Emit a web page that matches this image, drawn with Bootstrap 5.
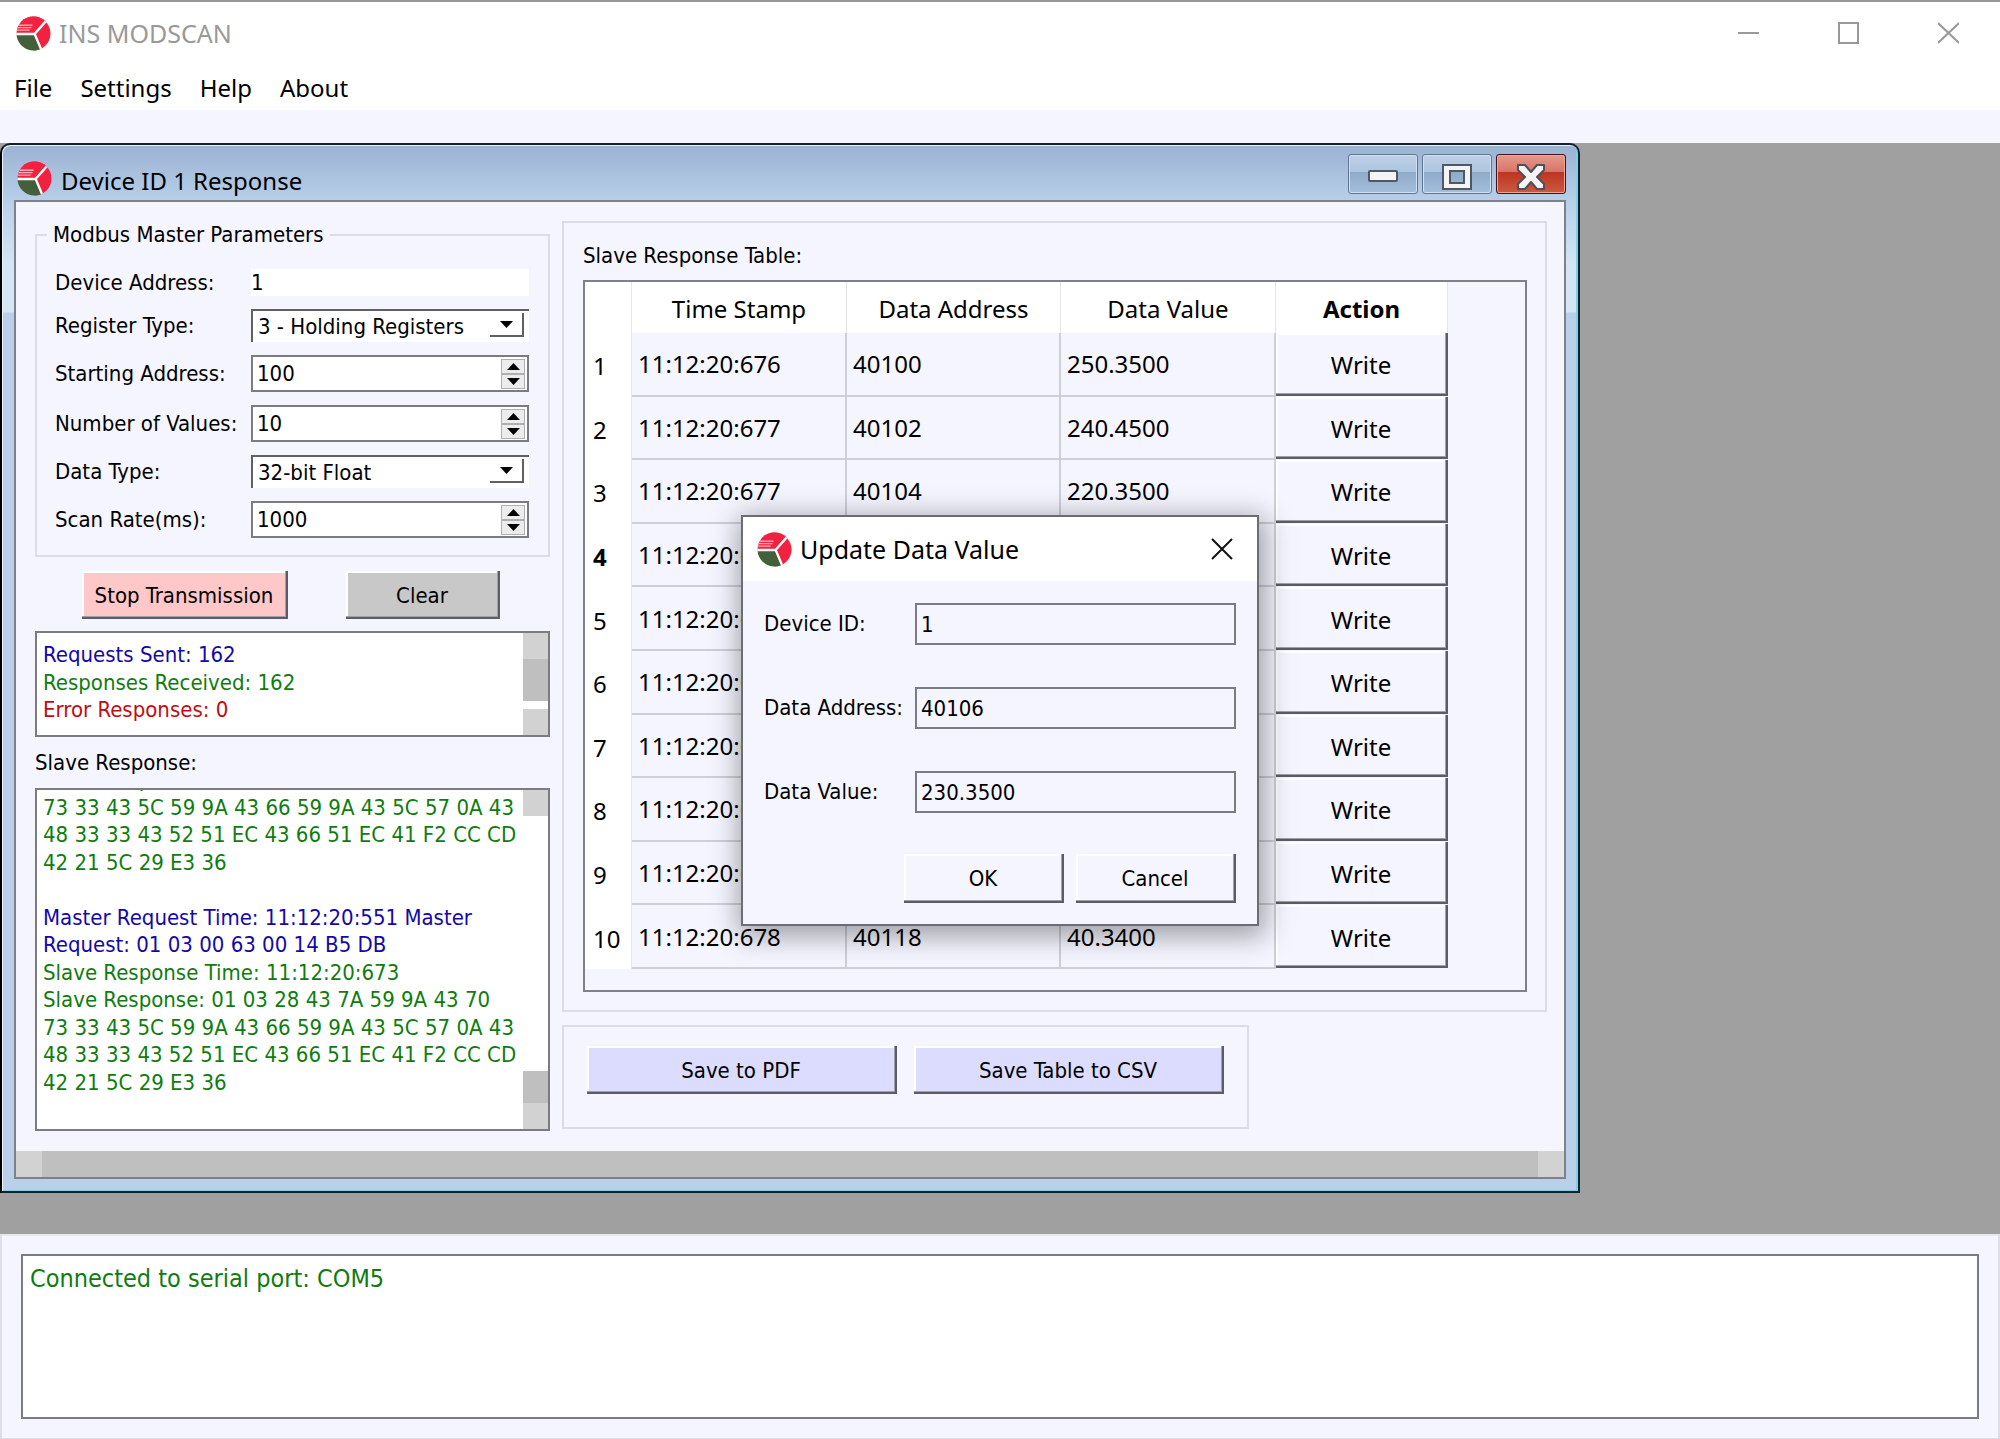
<!DOCTYPE html>
<html lang="en">
<head>
<meta charset="utf-8">
<meta name="viewport" content="width=device-width, initial-scale=1">
<title>INS MODSCAN</title>
<link rel="stylesheet" href="https://cdn.jsdelivr.net/npm/bootstrap@5.3.0/dist/css/bootstrap.min.css">
<style>
:root{--face:#f5f5ff;--line:#dcdce4;--edge:#808088;--ui:"Noto Sans","Open Sans",sans-serif;--tah:"DejaVu Sans Condensed","DejaVu Sans",sans-serif}
body{font-family:var(--ui);font-size:25px;line-height:32px;color:#000;background:#fff}
button,input,select{font:inherit;color:inherit}
.app{min-height:100vh;border-top:2px solid #979797}
.app-title{height:62px;padding-left:16px;color:#999}
.app-title button,.dlg-title button{background:none;border:0;padding:0;line-height:0}
.caption-btns{gap:79px;padding-right:41px}
.menu-bar{height:46px;padding:2px 14px 0;gap:28px;font-size:24px}
.menu-bar a{color:#000;text-decoration:none}
.tool-strip{height:33px;background:var(--face)}
.mdi{background:#a0a0a0;padding-bottom:41px}
.child{width:79%;border:2px solid #10202c;border-left-color:#000;border-radius:10px 10px 0 0;padding:0 12px 12px;
 background:linear-gradient(#9ab3d0,#b8cfea 56px,#d3e6f5 120px,#d3e6f5 167px,#b9cfea 168px);box-shadow:inset 1px 1px #e8f4fc,inset -2px -1px #7fd0e4}
.child-title{height:55px;padding:9px 0 0 3px;gap:9px;font-size:24px}
.child-name{padding-top:11px}
.child-logo{margin-top:7px}
.win-btn{width:70px;height:40px;padding:0;border:1px solid #5d7590;border-radius:3px;box-shadow:inset 0 0 0 1px #d3e2f1;
 background:linear-gradient(#bdd0e6,#adc5df 45%,#8eabca 46%,#a5bfdb)}
.win-close{border-color:#46111a;box-shadow:inset 0 0 0 1px #eda698;background:linear-gradient(#e5988c,#d67567 45%,#bc3520 46%,#cc5a42)}
.client{border:2px solid var(--edge);background:var(--face);font-family:var(--tah);font-size:22px;line-height:27px}
.client-pad{padding:19px 17px 20px 19px;gap:12px}
.left-col{width:515px}
.frame{border:2px solid var(--line)}
.params{position:relative;padding:33px 19px 16px 18px;margin-top:13px;min-height:323px}
.params legend{position:absolute;left:10px;top:-15px;width:auto;margin:0;padding:0 6px;float:none;font-size:22px;line-height:27px;background:var(--face)}
.param-grid{display:grid;grid-template-columns:196px 1fr;row-gap:13px;align-items:center}
.param-grid label{white-space:nowrap}
.plain-in{border:0;background:#fff;height:27px;padding:0;width:100%}
.combo{position:relative;height:33px}
.combo select{appearance:none;width:100%;height:33px;border:0;border-left:2px solid #606064;border-top:2px solid #606064;background:#fff;padding:0 0 0 5px;border-radius:0}
.combo span{position:absolute;right:5px;top:4px;width:34px;height:24px;border:solid #606064;border-width:0 2px 2px 0;display:flex;align-items:center;justify-content:center;pointer-events:none}
.spin{height:37px;border:2px solid #7c7c80;background:#fff;padding:2px}
.spin input{border:0;background:none;width:100%;padding:0 0 0 2px;appearance:textfield;-moz-appearance:textfield;outline:0}
.spin input::-webkit-inner-spin-button{appearance:none;display:none}
.spin button{width:24px;height:15px;padding:0;line-height:0;border:1px solid #b0b0b4;background:#ececec}
.raised{padding:3px 0 0;height:48px;background:var(--face);box-shadow:inset -1px -1px #a0a0a8,inset 2px 2px #fff;border:solid #5c5c66;border-width:0 2px 2px 0}
.actions{padding:0 50px 0 47px;margin-top:14px}
.btn-stop{background:#ffc8c8;width:206px}
.btn-clear{background:#c8c8c8;width:154px}
.logbox{border:2px solid #7c7c80;background:#fff}
.logbox p{margin:0;white-space:nowrap;line-height:1.25}
.stats{height:106px;margin-top:12px}
.stats-text{padding:8px 7px 8px 6px}
.trace{height:343px}
.trace-text{padding:0 0 33px 6px;overflow:hidden;display:flex;flex-direction:column;justify-content:flex-end}
.cap-line{padding:13px 0 12px;line-height:26px}
.t-blue{color:#1408a8}.t-green{color:#107c10}.t-red{color:#c00c14}
.vbar{width:25px;flex:none}
.sb-end{background:#d2d2d2;height:26px;flex:none}
.sb-thumb{background:#bfbfbf}
.hbar{height:26px;background:#bfbfbf}
.hbar i{width:26px;background:#d2d2d2}
.tbl-group{padding:19px 18px 17px 19px;min-height:791px}
.tbl-box{border:2px solid var(--edge);height:712px;margin-top:11px}
.reg-table{font-family:var(--ui);font-size:24px;width:863px;height:687px;border-collapse:separate;border-spacing:0;table-layout:fixed}
.reg-table th,.reg-table td{padding:0 0 0 6px;font-weight:400}
.reg-table thead th{background:#fff;height:51px;text-align:center;border-right:1px solid #e4e4ea;padding:1px 0 0}
.reg-table tbody th{background:#fff;padding:2px 0 0 8px;border-right:1px solid #e4e4ea}
.reg-table tbody td{border:solid #cfcfd8;border-width:0 2px 2px 0}
.reg-table tbody td:last-child{border:0;padding:0 0 1px;height:1px}
.reg-table .fw-bold{font-weight:700!important}
.reg-table .raised{width:100%;height:100%;display:block}
.save-group{width:687px;padding:19px 23px 33px 23px;gap:17px;margin-top:13px}
.save-group .raised{background:#dcdcff;height:48px;flex:1}
.dlg{position:absolute;left:741px;top:372px;width:518px;background:var(--face);border:2px solid #6c6c74;box-shadow:2px 6px 26px 4px rgba(0,0,0,.36);font-family:var(--tah);font-size:22px}
.dlg-title{font-family:var(--ui);font-size:25px;height:64px;background:#fff;padding:0 24px 0 14px;gap:8px}
.dlg-body{padding:22px 21px 21px}
.dlg-grid{display:grid;grid-template-columns:151px 1fr;row-gap:42px;align-items:center}
.dlg-grid label{white-space:nowrap}
.dlg-grid input{height:42px;width:100%;border:2px solid #7c7c80;background:var(--face);padding:0 4px}
.dlg-btns{gap:12px;margin-top:41px}
.dlg-btns .raised{width:160px;height:49px}
.status-panel{background:var(--face);border:2px solid #dedee6;border-top-color:#e8e8e8;padding:18px 19px 19px;margin-bottom:1px}
.status-box{border:2px solid #7c7c80;background:#fff;height:165px;padding:7px;font-family:var(--tah)}
</style>
</head>
<body>
<svg width="0" height="0" class="position-absolute" aria-hidden="true">
<defs>
<clipPath id="disc"><circle cx="18" cy="18" r="17.500"/></clipPath>
<symbol id="logo" viewBox="0 0 36 36">
<g clip-path="url(#disc)">
<path fill="#f2213f" d="M0 0h36v36H18z"/>
<path fill="#f2213f" d="M0 0h30v18H0z"/>
<path fill="#44603a" d="M0 19h19l8 19H0z"/>
<path fill="none" stroke="#fff" stroke-width="2.400" d="M-1 18.500h20L31 5M19 18l8 19"/>
<path fill="none" stroke="#ffa8b4" stroke-width="1.400" d="M3 9.500h14M1 12h15M0 14.500h14"/>
</g>
</symbol>
</defs>
</svg>
<div class="app d-flex flex-column">
<header class="app-title d-flex align-items-center justify-content-between">
<div class="d-flex align-items-center gap-2"><svg width="35" height="35"><use href="#logo"/></svg><span>INS MODSCAN</span></div>
<div class="caption-btns d-flex">
<button aria-label="Minimize"><svg width="21" height="22"><path stroke="#999" stroke-width="2" d="M0 11h21"/></svg></button>
<button aria-label="Maximize"><svg width="21" height="22"><path fill="none" stroke="#999" stroke-width="2" d="M1 1h19v20H1z"/></svg></button>
<button aria-label="Close"><svg width="21" height="22"><path stroke="#999" stroke-width="2" d="M0 1l21 20M21 1L0 21"/></svg></button>
</div>
</header>
<nav class="menu-bar d-flex align-items-center"><a href="#">File</a><a href="#">Settings</a><a href="#">Help</a><a href="#">About</a></nav>
<div class="tool-strip"></div>
<main class="mdi flex-fill position-relative">
<section class="child">
<div class="child-title d-flex align-items-start">
<svg class="child-logo" width="35" height="35"><use href="#logo"/></svg><span class="child-name">Device ID 1 Response</span>
<div class="d-flex ms-auto gap-1">
<button class="win-btn" aria-label="Minimize"><svg width="30" height="14"><rect x="1" y="1" width="28" height="10" rx="1" fill="#f4f4f4" stroke="#505868" stroke-width="2"/></svg></button>
<button class="win-btn" aria-label="Maximize"><svg width="30" height="26"><path fill="#f4f4f4" fill-rule="evenodd" stroke="#505868" stroke-width="2" d="M1 1h28v24H1zM8 7v12h14V7z"/></svg></button>
<button class="win-btn win-close" aria-label="Close"><svg width="30" height="26"><path fill="#f4f4f4" stroke="#505058" stroke-width="2" stroke-linejoin="round" d="M2 1h7l6 7 6-7h7v5l-7 7 7 7v5h-7l-6-7-6 7H2v-5l7-7-7-7z"/></svg></button>
</div>
</div>
<div class="client">
<div class="client-pad d-flex">
<div class="left-col d-flex flex-column flex-shrink-0">
<fieldset class="params frame">
<legend>Modbus Master Parameters</legend>
<div class="param-grid">
<label for="dev">Device Address:</label><input id="dev" class="plain-in" value="1">
<label for="reg">Register Type:</label><div class="combo"><select id="reg"><option>3 - Holding Registers</option></select><span><svg width="13" height="7"><path d="M0 0h13L6.500 7z"/></svg></span></div>
<label for="start">Starting Address:</label><div class="spin d-flex align-items-center"><input id="start" type="number" value="100"><div class="d-flex flex-column"><button aria-label="Up"><svg width="13" height="7"><path d="M0 7h13L6.500 0z"/></svg></button><button aria-label="Down"><svg width="13" height="7"><path d="M0 0h13L6.500 7z"/></svg></button></div></div>
<label for="num">Number of Values:</label><div class="spin d-flex align-items-center"><input id="num" type="number" value="10"><div class="d-flex flex-column"><button aria-label="Up"><svg width="13" height="7"><path d="M0 7h13L6.500 0z"/></svg></button><button aria-label="Down"><svg width="13" height="7"><path d="M0 0h13L6.500 7z"/></svg></button></div></div>
<label for="dtype">Data Type:</label><div class="combo"><select id="dtype"><option>32-bit Float</option></select><span><svg width="13" height="7"><path d="M0 0h13L6.500 7z"/></svg></span></div>
<label for="rate">Scan Rate(ms):</label><div class="spin d-flex align-items-center"><input id="rate" type="number" value="1000"><div class="d-flex flex-column"><button aria-label="Up"><svg width="13" height="7"><path d="M0 7h13L6.500 0z"/></svg></button><button aria-label="Down"><svg width="13" height="7"><path d="M0 0h13L6.500 7z"/></svg></button></div></div>
</div>
</fieldset>
<div class="actions d-flex justify-content-between"><button class="raised btn-stop">Stop Transmission</button><button class="raised btn-clear">Clear</button></div>
<div class="logbox stats d-flex">
<div class="stats-text flex-fill"><p class="t-blue">Requests Sent: 162</p><p class="t-green">Responses Received: 162</p><p class="t-red">Error Responses: 0</p></div>
<div class="vbar d-flex flex-column"><div class="sb-end"></div><div class="sb-thumb flex-fill mb-2"></div><div class="sb-end"></div></div>
</div>
<div class="cap-line">Slave Response:</div>
<div class="logbox trace d-flex">
<div class="trace-text flex-fill">
<p class="t-green">Slave Response: 01 03 28 43 7A 59 9A 43 70</p>
<p class="t-green">73 33 43 5C 59 9A 43 66 59 9A 43 5C 57 0A 43</p>
<p class="t-green">48 33 33 43 52 51 EC 43 66 51 EC 41 F2 CC CD</p>
<p class="t-green">42 21 5C 29 E3 36</p>
<p>&nbsp;</p>
<p class="t-blue">Master Request Time: 11:12:20:551 Master</p>
<p class="t-blue">Request: 01 03 00 63 00 14 B5 DB</p>
<p class="t-green">Slave Response Time: 11:12:20:673</p>
<p class="t-green">Slave Response: 01 03 28 43 7A 59 9A 43 70</p>
<p class="t-green">73 33 43 5C 59 9A 43 66 59 9A 43 5C 57 0A 43</p>
<p class="t-green">48 33 33 43 52 51 EC 43 66 51 EC 41 F2 CC CD</p>
<p class="t-green">42 21 5C 29 E3 36</p>
</div>
<div class="vbar d-flex flex-column"><div class="sb-end"></div><div class="sb-thumb mt-auto pt-3 pb-3"></div><div class="sb-end"></div></div>
</div>
</div>
<div class="flex-fill">
<div class="frame tbl-group">
<div>Slave Response Table:</div>
<div class="tbl-box">
<table class="reg-table">
<colgroup><col style="width:47px"><col style="width:215px"><col style="width:214px"><col style="width:215px"><col style="width:172px"></colgroup>
<thead><tr><th></th><th>Time Stamp</th><th>Data Address</th><th>Data Value</th><th class="fw-bold">Action</th></tr></thead>
<tbody>
<tr><th>1</th><td>11:12:20:676</td><td>40100</td><td>250.3500</td><td><button class="raised">Write</button></td></tr>
<tr><th>2</th><td>11:12:20:677</td><td>40102</td><td>240.4500</td><td><button class="raised">Write</button></td></tr>
<tr><th>3</th><td>11:12:20:677</td><td>40104</td><td>220.3500</td><td><button class="raised">Write</button></td></tr>
<tr><th class="fw-bold">4</th><td>11:12:20:677</td><td></td><td></td><td><button class="raised">Write</button></td></tr>
<tr><th>5</th><td>11:12:20:677</td><td></td><td></td><td><button class="raised">Write</button></td></tr>
<tr><th>6</th><td>11:12:20:677</td><td></td><td></td><td><button class="raised">Write</button></td></tr>
<tr><th>7</th><td>11:12:20:678</td><td></td><td></td><td><button class="raised">Write</button></td></tr>
<tr><th>8</th><td>11:12:20:678</td><td></td><td></td><td><button class="raised">Write</button></td></tr>
<tr><th>9</th><td>11:12:20:678</td><td></td><td></td><td><button class="raised">Write</button></td></tr>
<tr><th>10</th><td>11:12:20:678</td><td>40118</td><td>40.3400</td><td><button class="raised">Write</button></td></tr>
</tbody>
</table>
</div>
</div>
<div class="frame save-group d-flex"><button class="raised">Save to PDF</button><button class="raised">Save Table to CSV</button></div>
</div>
</div>
<div class="hbar d-flex justify-content-between"><i></i><i></i></div>
</div>
</section>
<div class="dlg" role="dialog" aria-label="Update Data Value">
<div class="dlg-title d-flex align-items-center"><svg width="35" height="35"><use href="#logo"/></svg><span>Update Data Value</span><button class="ms-auto" aria-label="Close"><svg width="22" height="22"><path stroke="#111" stroke-width="2" d="M1 1l20 20M21 1L1 21"/></svg></button></div>
<div class="dlg-body">
<div class="dlg-grid">
<label for="d1">Device ID:</label><input id="d1" value="1">
<label for="d2">Data Address:</label><input id="d2" value="40106">
<label for="d3">Data Value:</label><input id="d3" value="230.3500">
</div>
<div class="dlg-btns d-flex justify-content-end"><button class="raised">OK</button><button class="raised">Cancel</button></div>
</div>
</div>
</main>
<footer class="status-panel"><div class="status-box t-green">Connected to serial port: COM5</div></footer>
</div>
<script src="https://cdn.jsdelivr.net/npm/bootstrap@5.3.0/dist/js/bootstrap.bundle.min.js"></script>
</body>
</html>
